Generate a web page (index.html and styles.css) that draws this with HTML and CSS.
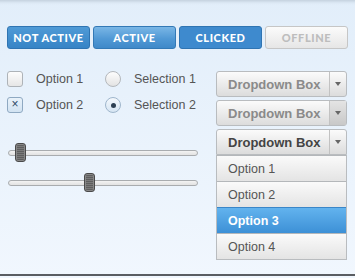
FILE: index.html
```html
<!DOCTYPE html>
<html>
<head>
<meta charset="utf-8">
<link rel="stylesheet" href="styles.css">
</head>
<body>
<div class="page">
  <div class="buttons">
    <div class="btn btn-normal">NOT ACTIVE</div>
    <div class="btn btn-active">ACTIVE</div>
    <div class="btn btn-clicked">CLICKED</div>
    <div class="btn btn-offline">OFFLINE</div>
  </div>
  <div class="main">
    <div class="left">
      <div class="checks">
        <span class="box"></span><span class="label">Option 1</span>
        <span class="radio"></span><span class="label">Selection 1</span>
        <span class="box checked">&#215;</span><span class="label">Option 2</span>
        <span class="radio selected"><span class="dot"></span></span><span class="label">Selection 2</span>
      </div>
      <div class="sliders">
        <div class="slider"><div class="track"></div><div class="thumb" style="left:7px"></div></div>
        <div class="slider"><div class="track"></div><div class="thumb" style="left:76px"></div></div>
      </div>
    </div>
    <div class="right">
      <div class="dd"><span class="dd-text">Dropdown Box</span><span class="dd-arrow"><span class="tri"></span></span></div>
      <div class="dd hover"><span class="dd-text">Dropdown Box</span><span class="dd-arrow"><span class="tri"></span></span></div>
      <div class="dd open"><span class="dd-text">Dropdown Box</span><span class="dd-arrow"><span class="tri"></span></span></div>
      <div class="list">
        <div class="item">Option 1</div>
        <div class="item">Option 2</div>
        <div class="item sel">Option 3</div>
        <div class="item">Option 4</div>
      </div>
    </div>
  </div>
</div>
</body>
</html>
```
FILE: styles.css
```css
html, body { margin: 0; padding: 0; }
body {
  width: 355px;
  height: 278px;
  overflow: hidden;
  background: linear-gradient(#e2eefa, #f1f7fe);
  font-family: "Liberation Sans", Arial, sans-serif;
  position: relative;
}
.page {
  height: 276px;
  box-sizing: border-box;
  border-bottom: 2px solid #5a5d62;
  padding: 26px 0 0 7px;
  background: linear-gradient(#c5d2df 0, #dde9f5 3px, transparent 5px);
}
.buttons { display: flex; gap: 3px; }
.btn {
  width: 83px;
  height: 23px;
  box-sizing: border-box;
  border-radius: 3px;
  font-family: Lato, "Liberation Sans", sans-serif;
  font-weight: 900;
  font-size: 11px;
  letter-spacing: 0.6px;
  display: flex;
  align-items: center;
  justify-content: center;
  color: #fff;
}
.btn-normal {
  background: linear-gradient(#4f9ad6, #3784c6);
  border: 1px solid #2f74b2;
}
.btn-active {
  background: linear-gradient(#7ab6e6, #5199d5 55%, #3f89c9);
  border: 1px solid #3379b6;
}
.btn-clicked {
  background: #3e8ace;
  border: 1px solid #2f74b2;
}
.btn-offline {
  background: linear-gradient(#fbfbfb, #e6e6e6);
  border: 1px solid #c6c6c6;
  color: #bdbdbd;
}
.main {
  display: flex;
  margin-top: 22px;
}
.left { width: 209px; }
.checks {
  display: grid;
  grid-template-columns: 29px 69px 29px auto;
  grid-auto-rows: 16px;
  row-gap: 10px;
  align-items: center;
}
.label { font-size: 12.5px; color: #555; line-height: 16px; }
.box {
  width: 16px; height: 16px; box-sizing: border-box;
  border: 1px solid #aeb3b8; border-radius: 3px;
  background: linear-gradient(#fdfdfd, #e6e6e6);
}
.box.checked {
  background: linear-gradient(#e9f2fa, #d2e3f2);
  border-color: #8fa9c2;
  color: #2d4a66;
  font-size: 12px;
  line-height: 13px;
  text-align: center;
}
.radio {
  width: 16px; height: 16px; box-sizing: border-box;
  border: 1px solid #b4b8bc; border-radius: 50%;
  background: linear-gradient(#fdfdfd, #e3e3e3);
  display: flex; align-items: center; justify-content: center;
}
.radio.selected {
  background: linear-gradient(#f4f8fc, #d6e5f3);
  border-color: #9fb6cc;
}
.dot { width: 5px; height: 5px; border-radius: 50%; background: #2d3f52; }
.sliders { margin-top: 30px; display: flex; flex-direction: column; gap: 11px; }
.slider { position: relative; height: 19px; width: 190px; margin-left: 1px; }
.track {
  position: absolute; left: 0; right: 0; top: 7px; height: 6px;
  box-sizing: border-box;
  border: 1px solid #a9acaf; border-radius: 3px;
  background: linear-gradient(#f3f3f3, #e2e2e2);
}
.thumb {
  position: absolute; top: 0; width: 11px; height: 19px; box-sizing: border-box;
  border: 1px solid #4a4a4a; border-radius: 3px;
  background: repeating-linear-gradient(#7a7a7a 0 1px, #5e5e5e 1px 2px);
  box-shadow: inset 0 0 0 1px #888;
}
.right { width: 131px; display: flex; flex-direction: column; }
.dd {
  height: 26px; box-sizing: border-box;
  border: 1px solid #b9bcbf; border-radius: 3px;
  background: linear-gradient(#fbfbfb, #dcdcdc);
  display: flex; margin-bottom: 3px;
}
.dd-text {
  flex: 1; font-size: 13px; font-weight: bold; color: #8a8a8a;
  display: flex; align-items: center; padding-left: 11px;
}
.dd-arrow {
  width: 16px; border-left: 1px solid #c2c2c2;
  display: flex; align-items: center; justify-content: center;
}
.tri { width: 0; height: 0; border-left: 3.5px solid transparent; border-right: 3.5px solid transparent; border-top: 4px solid #666; }
.dd.hover .dd-arrow { background: linear-gradient(#e4e4e4, #c8c8c8); }
.dd.open { margin-bottom: 0; border-radius: 3px 3px 0 0; }
.dd.open .dd-text { color: #444; }
.list {
  border: 1px solid #b9bcbf; border-top: none;
}
.item {
  height: 26px; box-sizing: border-box;
  border-top: 1px solid #b4b7ba;
  background: linear-gradient(#fafafa, #e4e4e4);
  font-size: 12.5px; color: #555;
  display: flex; align-items: center; padding-left: 11px;
}
.item.sel {
  background: linear-gradient(#62b3ee, #3d90d6);
  border-top-color: #3a86c8;
  color: #fff; font-weight: bold;
}
```
